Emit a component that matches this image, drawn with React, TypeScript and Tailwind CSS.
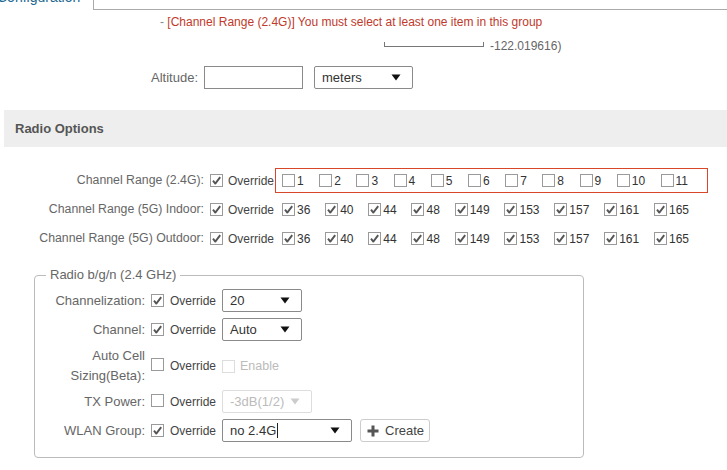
import React from 'react'

const font = { fontFamily: '"Liberation Sans", Arial, sans-serif' }

function Check({ checked = false, disabled = false }: { checked?: boolean; disabled?: boolean }) {
  return (
    <span
      className={`inline-flex h-[13px] w-[13px] shrink-0 items-center justify-center border bg-white ${
        disabled ? 'border-[#dddddd]' : 'border-[#9a9a9a]'
      }`}
    >
      {checked && (
        <svg width="11" height="11" viewBox="0 0 11 11">
          <path d="M2 5.6 L4.3 8.6 L9.2 2.2" fill="none" stroke="#555" strokeWidth="1.9" strokeLinejoin="round" />
        </svg>
      )}
    </span>
  )
}

function Arrow({ color = '#111' }: { color?: string }) {
  return (
    <svg width="10" height="7" viewBox="0 0 10 7">
      <path d="M0.5 0.5 H9.5 L5 6.5 Z" fill={color} />
    </svg>
  )
}

function Select({ value, width, disabled = false, cursor = false }: { value: string; width: string; disabled?: boolean; cursor?: boolean }) {
  return (
    <div
      className={`flex h-[23px] shrink-0 items-center justify-between rounded-[2px] border pl-[7px] pr-[11px] text-[13px] ${width} ${
        disabled ? 'border-[#dddddd] text-[#bbbbbb]' : 'border-[#8a8a8a] text-[#333333]'
      }`}
    >
      <span className="flex items-center">
        {value}
        {cursor && <span className="ml-[1px] inline-block h-[15px] w-px bg-[#222]" />}
      </span>
      <Arrow color={disabled ? '#cccccc' : '#111'} />
    </div>
  )
}

const ch24 = ['1', '2', '3', '4', '5', '6', '7', '8', '9', '10', '11']
const ch5 = ['36', '40', '44', '48', '149', '153', '157', '161', '165']

function ChannelRow({ label, channels, checked, error = false }: { label: string; channels: string[]; checked: boolean; error?: boolean }) {
  return (
    <div className="flex h-[25px] items-center">
      <div className="w-[204px] text-right text-[12.3px] text-[#666666]">{label}</div>
      <div className="ml-[6px]"><Check checked /></div>
      <span className="ml-[5px] text-[12px] text-[#444444]">Override</span>
      <div className={`ml-[1px] flex h-[25px] items-center border pl-[6px] pr-[3px] ${error ? 'border-[#d9472b]' : 'border-transparent'}`}>
        {channels.map((c) => (
          <div key={c} className={`flex items-center ${error ? 'mr-[15.5px]' : 'mr-[14.8px]'}`}>
            <Check checked={checked} />
            <span className="ml-[2px] text-[12px] text-[#333333]">{c}</span>
          </div>
        ))}
      </div>
    </div>
  )
}

function FieldRow({ label, checked, children, h = 'h-[23px]', mt }: { label: React.ReactNode; checked: boolean; children?: React.ReactNode; h?: string; mt: string }) {
  return (
    <div className={`flex items-center ${h} ${mt}`}>
      <div className="w-[99px] text-right text-[13px] leading-[20px] text-[#666666]">{label}</div>
      <div className="ml-[6px]"><Check checked={checked} /></div>
      <span className="ml-[6px] text-[12px] text-[#444444]">Override</span>
      <div className="ml-[6px] flex items-center">{children}</div>
    </div>
  )
}

export default function App() {
  return (
    <div className="h-[470px] w-[727px] overflow-hidden bg-white" style={font}>
      {/* tab strip */}
      <div className="flex h-[10px]">
        <div className="w-[93px] overflow-hidden">
          <div className="-ml-[3px] -mt-[11px] text-[14px] leading-[16px] text-[#1d6791]">Configuration</div>
        </div>
        <div className="flex-1 border-b border-l border-[#aaaaaa]" />
      </div>

      <div className="mt-[4px] pl-[160px] text-[12px] leading-[16px]">
        <span className="text-[#888888]">- </span>
        <span className="text-[#c0392b]">[Channel Range (2.4G)] You must select at least one item in this group</span>
      </div>

      <div className="mt-[8px] flex h-[16px]">
        <div className="ml-[384px] mt-[4px] h-[5px] w-[100px] border-x border-b border-[#777777]" />
        <span className="ml-[6px] text-[12px] leading-[16px] text-[#666666]">-122.019616)</span>
      </div>

      <div className="mt-[12px] flex items-center">
        <div className="w-[198px] text-right text-[13px] text-[#666666]">Altitude:</div>
        <div className="ml-[6px] h-[23px] w-[99px] border border-[#8a8a8a]" />
        <div className="ml-[11px]"><Select value="meters" width="w-[99px]" /></div>
      </div>

      <div className="ml-[4px] mt-[21px] flex h-[37px] items-center bg-[#eeeeee] pl-[11px] text-[13px] font-bold text-[#555555]">
        Radio Options
      </div>

      <div className="mt-[21px] flex flex-col gap-[4px]">
        <ChannelRow label="Channel Range (2.4G):" channels={ch24} checked={false} error />
        <ChannelRow label="Channel Range (5G) Indoor:" channels={ch5} checked />
        <ChannelRow label="Channel Range (5G) Outdoor:" channels={ch5} checked />
      </div>

      <fieldset className="ml-[34px] mt-[16px] w-[550px] rounded-[4px] border border-[#bbbbbb] pb-[15px] pl-[11px]">
        <legend className="px-[4px] text-[13px] leading-[16px] text-[#666666]">Radio b/g/n (2.4 GHz)</legend>
        <FieldRow label="Channelization:" checked mt="mt-[6px]">
          <Select value="20" width="w-[80px]" />
        </FieldRow>
        <FieldRow label="Channel:" checked mt="mt-[6px]">
          <Select value="Auto" width="w-[80px]" />
        </FieldRow>
        <FieldRow label={<>Auto Cell<br />Sizing(Beta):</>} checked={false} h="h-[40px]" mt="mt-[5px]">
          <Check disabled />
          <span className="ml-[5px] text-[12.5px] text-[#bbbbbb]">Enable</span>
        </FieldRow>
        <FieldRow label="TX Power:" checked={false} mt="mt-[4px]">
          <Select value="-3dB(1/2)" width="w-[90px]" disabled />
        </FieldRow>
        <FieldRow label="WLAN Group:" checked mt="mt-[6px]">
          <Select value="no 2.4G" width="w-[130px]" cursor />
          <button className="ml-[8px] flex h-[23px] w-[70px] items-center rounded-[3px] border border-[#cccccc] pl-[6px] text-[13px] text-[#444444]">
            <svg width="12" height="12" viewBox="0 0 12 12">
              <path d="M4.5 0.5 H7.5 V4.5 H11.5 V7.5 H7.5 V11.5 H4.5 V7.5 H0.5 V4.5 H4.5 Z" fill="#555" />
            </svg>
            <span className="ml-[6px]">Create</span>
          </button>
        </FieldRow>
      </fieldset>
    </div>
  )
}
